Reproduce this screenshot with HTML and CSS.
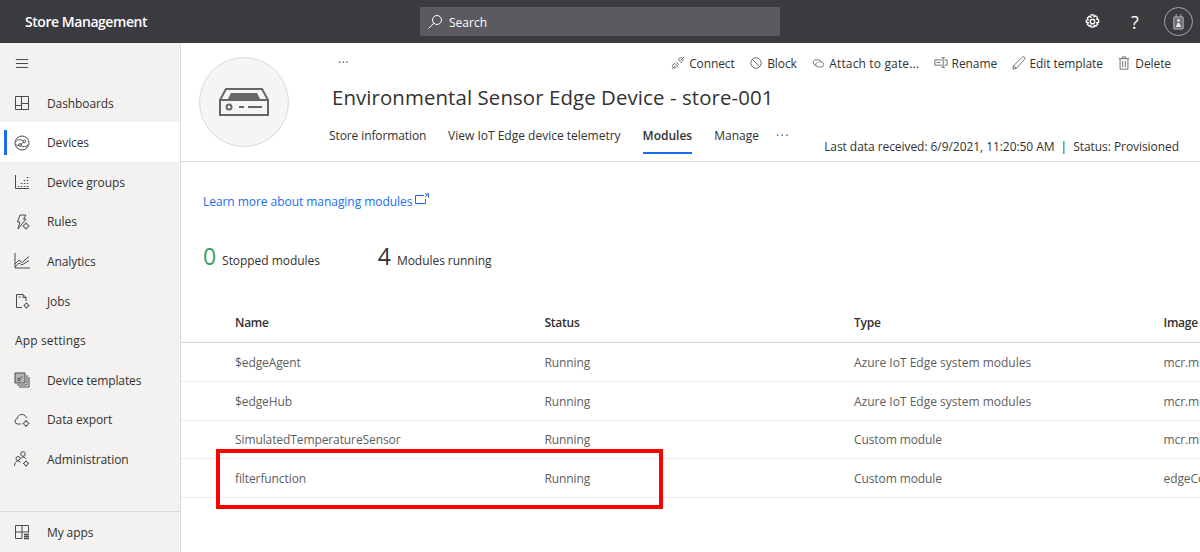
FILE: index.html
```html
<!DOCTYPE html>
<html lang="en">
<head>
<meta charset="utf-8">
<title>Store Management</title>
<link rel="stylesheet" href="styles.css">
</head>
<body>
<header class="topbar">
  <div class="brand">Store Management</div>
  <div class="search">
    <svg class="ic16" viewBox="0 0 16 16"><circle cx="10" cy="6" r="4.5"/><path d="M6.800 9.200 1.500 14.500"/></svg>
    <span>Search</span>
  </div>
  <div class="top-actions">
    <svg class="top-gear" viewBox="0 0 16 16"><circle cx="8" cy="8" r="2.400"/><path d="M6.600 1h2.800l.4 2 1.700-1 2 2-1 1.700 2 .4v2.800l-2 .4 1 1.700-2 2-1.700-1-.4 2H6.600l-.4-2-1.700 1-2-2 1-1.700-2-.4V6.600l2-.4-1-1.700 2-2 1.700 1z"/></svg>
    <span class="help">?</span>
    <span class="avatar">
      <svg viewBox="0 0 14 20"><path d="M4 0v4M10 0v4"/><rect class="badge" x="1" y="3.500" width="12" height="15.500" rx="1"/><circle class="cut" cx="7" cy="8" r="1.800"/><path class="cut" d="M3.500 16.500 6 11h2l2.500 5.500z"/></svg>
    </span>
  </div>
</header>
<div class="shell">
  <nav class="sidebar">
    <div class="burger"><svg viewBox="0 0 16 12"><path d="M1 1.500h14M1 6h14M1 10.500h14"/></svg></div>
    <a class="nav-item"><svg viewBox="0 0 16 16"><path d="M1.500 1.500h13v13h-13zM7.500 1.500v13M7.500 8.500h7M1.500 10.500h6"/></svg><span>Dashboards</span></a>
    <a class="nav-item active"><svg viewBox="0 0 16 16"><circle cx="8" cy="8" r="7"/><circle cx="6" cy="10" r="1.300"/><circle cx="10.500" cy="6.500" r="1.300"/><path d="M2 6.500c2-2 4-2.500 7.500-.5M7 9.500l2.500-2M1.500 10c2 0 2.500 1 3.500.5M7.500 11c2 1 4 1 6.500-1"/></svg><span>Devices</span></a>
    <a class="nav-item"><svg viewBox="0 0 16 16"><path d="M1.500 1v13.500H15"/><path class="dots" d="M4.500 12v1M7.500 12v1M7.500 9v1M10.500 12v1M10.500 9v1M10.500 6v1M13.500 12v1M13.500 9v1M13.500 6v1M13.500 3v1"/></svg><span>Device groups</span></a>
    <a class="nav-item"><svg viewBox="0 0 16 16"><path d="M6 1h6L9.500 5H12l-8 10 2-7H3.500z"/><circle cx="12" cy="12" r="2.300"/><path d="M12 8.500v1M12 14.500v1M8.500 12h1M14.500 12h1"/></svg><span>Rules</span></a>
    <a class="nav-item"><svg viewBox="0 0 16 16"><path d="M1 0v15h15"/><path d="M1 11l4-4 3 2.500L15 3.500"/><path d="M1 14l4-4 3 2 7-4.500"/></svg><span>Analytics</span></a>
    <a class="nav-item"><svg viewBox="0 0 16 16"><path d="M8 14.500H2.500v-13H9l3 3V8"/><path d="M9 1.500v3h3M4.500 4h2"/><circle cx="12.500" cy="12.500" r="2"/><path d="M12.500 9.500v1M12.500 14.500v1M9.500 12.500h1M14.500 12.500h1"/></svg><span>Jobs</span></a>
    <div class="nav-heading">App settings</div>
    <a class="nav-item"><svg viewBox="0 0 16 16"><path class="fill" d="M1 1h10v10H1z"/><path d="M1 1h10v10H1zM3 13h10V3M5 15h10V5"/><circle cx="5" cy="7.500" r="1.300"/><path d="M6 6.500l2.500-2.500"/></svg><span>Device templates</span></a>
    <a class="nav-item"><svg viewBox="0 0 16 16"><path d="M7 12H3.500a2.800 2.800 0 0 1-.3-5.500C4 3.500 6 2.500 8 2.500c2.500 0 4 1.500 4.500 3.500"/><circle cx="12" cy="11.500" r="2.200"/><path d="M12 8v1M12 14v1M8.500 11.500h1M14.500 11.500h1"/></svg><span>Data export</span></a>
    <a class="nav-item"><svg viewBox="0 0 16 16"><circle cx="9" cy="3" r="2.300"/><circle cx="4" cy="7.500" r="2"/><path d="M.5 15c0-3 1.500-5 3.500-5 1 0 2 .5 2.500 1.500M6.500 8c.5-1 1.500-2 2.500-2 1.500 0 2.500 1 3 2"/><circle cx="12" cy="12.500" r="2"/><path d="M12 9.500v1M12 14.500v1M9 12.500h1M14 12.500h1"/></svg><span>Administration</span></a>
    <a class="nav-item apps"><svg viewBox="0 0 16 16"><path d="M1.500 14.500v-13h13v7M1.500 8h13M8 1.500v13M1.500 14.500H8"/><path class="dots" d="M10 10.500h5M10 12.500h5M10 14.500h5"/></svg><span>My apps</span></a>
  </nav>
  <main class="main">
    <section class="hero">
      <div class="device-badge">
        <svg viewBox="0 0 50 28"><path class="shell-line" d="M1 12 7 1h36l6 11v15H1zM1 12h48"/><path class="solid" d="M9 11l3-6h26l3 6z"/><circle class="shell-line" cx="10" cy="19" r="2.500"/><path class="shell-line" d="M20 19h5M29 19h14"/></svg>
      </div>
      <div class="hero-left">
        <div class="crumb-more">···</div>
        <h1>Environmental Sensor Edge Device - store-001</h1>
        <div class="tabs">
          <a class="tab first">Store information</a>
          <a class="tab">View IoT Edge device telemetry</a>
          <a class="tab selected">Modules</a>
          <a class="tab">Manage</a>
          <a class="tab more">···</a>
        </div>
      </div>
      <div class="hero-right">
        <div class="commands">
          <a class="cmd"><svg viewBox="0 0 16 16"><path d="M1 15l4-4M15 1l-4 4"/><path d="M4.500 8.500 7.500 11.500 6 13c-1 1-2.500 1-3.500 0s-1-2.500 0-3.500zM8.500 4.500l3 3L13 6c1-1 1-2.500 0-3.500s-2.500-1-3.500 0zM6 7l3 3"/></svg>Connect</a>
          <a class="cmd"><svg viewBox="0 0 16 16"><circle cx="8" cy="8" r="6"/><path d="M3.800 3.800l8.400 8.400"/></svg>Block</a>
          <a class="cmd"><svg viewBox="0 0 18 16"><path d="M7 11H5a4 4 0 0 1 0-7h5a4 4 0 0 1 3 2"/><path d="M10 6.500h3a3 3 0 0 1 0 6.500H9c-2 0-3-1.500-3-3 0-2 2-3 3-3"/></svg><span class="wide">Attach to gate...</span></a>
          <a class="cmd"><svg viewBox="0 0 16 16"><path d="M9 4.500H1v6h8M12 4.500h3v6h-3M10.500 2v11M8.500 2h4M8.500 13h4M3 7.500h4"/></svg>Rename</a>
          <a class="cmd"><svg viewBox="0 0 16 16"><path d="M1 15l1-4L11.500 1.500c1-1 2-1 2.800-.2s.8 1.800-.2 2.800L5 14z"/><path d="M2 11l3 3"/></svg>Edit template</a>
          <a class="cmd"><svg viewBox="0 0 16 16"><path d="M2 3h12M6 3V1h4v2M3.500 3v12h9V3M6.500 5.500v7M9.500 5.500v7"/></svg>Delete</a>
        </div>
        <div class="status-line">Last data received: 6/9/2021, 11:20:50 AM &nbsp;|&nbsp; Status: Provisioned</div>
      </div>
    </section>
    <section class="content">
      <a class="learn">Learn more about managing modules<svg viewBox="0 0 14 12"><path d="M9 2.500H.5v8h10V6"/><path d="M10 1h3.500v3.500M13.500 1 10 4"/></svg></a>
      <div class="stats">
        <div class="stat"><span class="num ok">0</span><span>Stopped modules</span></div>
        <div class="stat"><span class="num">4</span><span>Modules running</span></div>
      </div>
      <div class="table">
        <div class="row head"><span>Name</span><span>Status</span><span>Type</span><span>Image</span></div>
        <div class="row"><span>$edgeAgent</span><span>Running</span><span class="type">Azure IoT Edge system modules</span><span>mcr.microsoft.com/azureiotedge-agent:1.1</span></div>
        <div class="row"><span>$edgeHub</span><span>Running</span><span class="type">Azure IoT Edge system modules</span><span>mcr.microsoft.com/azureiotedge-hub:1.1</span></div>
        <div class="row"><span>SimulatedTemperatureSensor</span><span>Running</span><span>Custom module</span><span>mcr.microsoft.com/azureiotedge-simulated</span></div>
        <div class="row"><span>filterfunction</span><span>Running</span><span>Custom module</span><span>edgeContainerRegistry.azurecr.io/filter</span></div>
      </div>
    </section>
    <div class="highlight"></div>
  </main>
</div>
</body>
</html>
```
FILE: styles.css
```css
* { box-sizing: border-box; }
html, body { margin: 0; height: 552px; overflow: hidden; }
body {
  font-family: "Open Sans", "Noto Sans", sans-serif;
  font-size: 12px;
  color: #323130;
  background: #fff;
  display: flex;
  flex-direction: column;
}
svg { fill: none; stroke: currentColor; stroke-width: 1; display: block; flex: none; }
svg .solid { fill: currentColor; stroke: none; }
svg .fill { fill: #b9b7b5; stroke: none; }
a { color: inherit; text-decoration: none; }

.topbar {
  height: 43px;
  flex: none;
  background: #3b3a3f;
  color: #fff;
  display: grid;
  grid-template-columns: 420px 360px 1fr;
  align-items: center;
}
.brand { padding-left: 25px; font-size: 14px; font-weight: 600; letter-spacing: -0.45px; }
.search {
  height: 29px;
  background: #5b5a5e;
  display: flex;
  align-items: center;
  gap: 6px;
  padding: 1px 0 0 7px;
  font-size: 12px;
}
.ic16 { width: 16px; height: 16px; }
.top-actions { display: flex; align-items: center; justify-content: flex-end; padding-right: 7px; }
.top-gear { width: 15px; height: 15px; margin-right: 31px; stroke-width: 1.4; }
.help { font-size: 18px; font-weight: 400; width: 12px; margin-right: 21px; }
.avatar {
  width: 29px; height: 29px; border-radius: 50%;
  border: 1px solid #a8a7aa;
  display: flex; align-items: center; justify-content: center;
  color: #cfcfcf;
}
.avatar svg { width: 11px; height: 16px; }
.avatar .badge { fill: #6d6c70; }
.avatar .cut { fill: #e4e4e4; stroke: none; }

.shell { flex: 1; display: flex; min-height: 0; }
.sidebar {
  width: 181px;
  flex: none;
  background: #f3f2f1;
  border-right: 1px solid #dcdbda;
  display: flex;
  flex-direction: column;
}
.burger { height: 40.3px; flex: none; padding: 15px 0 0 15px; color: #323130; }
.burger svg { width: 14px; height: 11px; }
.nav-item {
  height: 39.6px;
  flex: none;
  display: flex;
  align-items: center;
  padding-left: 14px;
  gap: 17px;
  font-size: 12px;
  letter-spacing: -0.1px;
  position: relative;
  color: #323130;
}
.nav-item svg { width: 16px; height: 16px; color: #4a4947; }
.nav-item .dots { stroke-width: 1.5; }
.nav-item.active { background: #fff; box-shadow: 0 -1px 0 #fff; }
.nav-item.active::before {
  content: "";
  position: absolute;
  left: 4px; top: 7px; bottom: 7px;
  width: 3px;
  background: #1a6cf2;
}
.nav-heading {
  height: 39.6px;
  flex: none;
  display: flex;
  align-items: center;
  padding-left: 15px;
  font-size: 12px;
  font-weight: 500;
  letter-spacing: 0.15px;
}
.nav-item.apps {
  margin-top: auto;
  height: 41px;
  border-top: 1px solid #dcdbda;
}

.main { flex: 1; min-width: 0; position: relative; overflow: hidden; }
.hero {
  height: 119px;
  border-bottom: 1px solid #dcdbda;
  display: flex;
  padding: 14px 21px 0 18px;
}
.device-badge {
  width: 90px; height: 90px;
  border-radius: 50%;
  background: #f5f5f5;
  border: 1px solid #dcdbda;
  display: flex; align-items: center; justify-content: center;
  flex: none;
  color: #666;
}
.device-badge svg { width: 50px; height: 28px; }
.device-badge .shell-line { stroke-width: 2; }
.hero-left { margin-left: 40px; width: 470px; flex: none; }
.crumb-more { margin: -3px 0 0 9px; height: 29px; color: #605e5c; font-size: 12px; letter-spacing: 0.5px; }
.hero-left h1 {
  margin: 0 0 0 3px;
  font-size: 20.4px;
  font-weight: 400;
  letter-spacing: 0.1px;
  line-height: 28px;
  color: #323130;
  white-space: nowrap;
}
.tabs { display: flex; gap: 21px; margin-top: 13px; }
.tab {
  height: 30px;
  padding-top: 3px;
  font-size: 12px;
  white-space: nowrap;
  color: #323130;
}
.tab.first { letter-spacing: -0.1px; margin-right: 0.7px; }
.tab.selected { font-weight: 600; border-bottom: 2px solid #1a6cf2; margin: 0 1px; }
.tab.more { margin-left: -4px; color: #605e5c; letter-spacing: 1.5px; }
.hero-right { flex: 1; min-width: 0; display: flex; flex-direction: column; align-items: flex-end; margin-left: -40px; }
.commands { display: flex; gap: 14.5px; margin: -3px 8px 0 0; white-space: nowrap; }
.cmd { display: flex; align-items: center; gap: 4px; letter-spacing: -0.1px; height: 18px; }
.cmd .wide { letter-spacing: 0.15px; }
.cmd svg { width: 14px; height: 14px; color: #605e5c; }
.status-line { margin-top: 66px; white-space: nowrap; letter-spacing: -0.06px; }

.content { display: flex; flex-direction: column; }
.learn {
  color: #1a6cf2;
  display: flex;
  gap: 3px;
  margin: 31px 0 0 22px;
  line-height: 17px;
  letter-spacing: -0.05px;
}
.learn svg { width: 14px; height: 12px; }
.stats { display: flex; margin: 30px 0 0 22px; gap: 58px; height: 35px; align-items: baseline; letter-spacing: -0.05px; }
.stat { display: flex; align-items: baseline; gap: 6px; }
.num { font-size: 23px; }
.num.ok { color: #3c9e5f; }
.table { margin-top: 27px; }
.row {
  display: grid;
  grid-template-columns: repeat(4, 309.5px);
  padding: 1px 0 0 54px;
  height: 38.8px;
  align-items: center;
  border-bottom: 1px solid #edebe9;
  color: #605e5c;
  white-space: nowrap;
  letter-spacing: -0.1px;
}
.row .type { letter-spacing: 0; }
.row.head { height: 41px; padding-top: 0; color: #323130; font-weight: 600; border-bottom-color: #d6d5d3; letter-spacing: -0.25px; }
.highlight {
  position: absolute;
  left: 35px; top: 406px;
  width: 447px; height: 60px;
  border: 4px solid #ff0000;
  pointer-events: none;
}
```
